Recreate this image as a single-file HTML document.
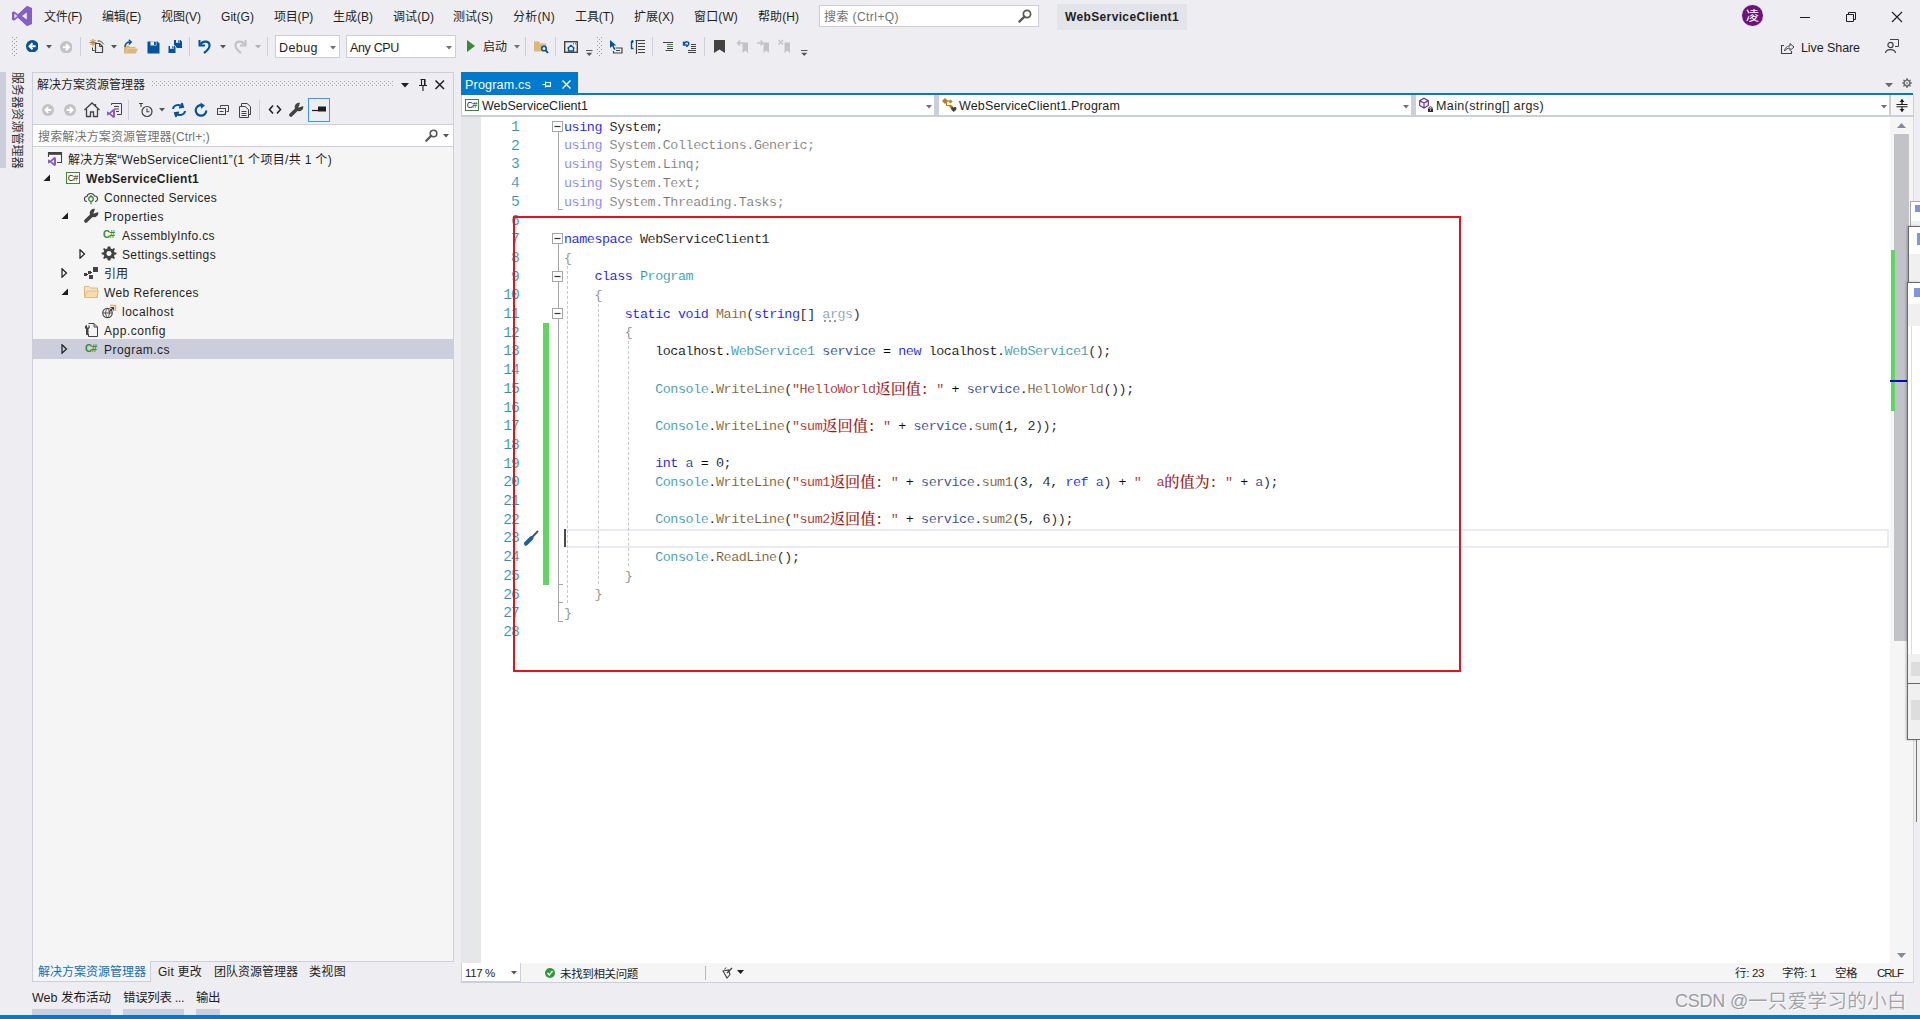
<!DOCTYPE html>
<html lang="zh-CN"><head><meta charset="utf-8"><title>WebServiceClient1 - Microsoft Visual Studio</title>
<style>
html,body{margin:0;padding:0}
body{width:1920px;height:1019px;overflow:hidden;background:#eeeef2;position:relative;font-family:"Liberation Sans","Noto Sans CJK SC",sans-serif;font-size:12px;color:#1e1e1e}
.a{position:absolute;display:block;box-sizing:border-box}
.t{position:absolute;white-space:pre;display:block}
.b{font-weight:bold}
.g{color:#717171}
.code{font-family:"Liberation Mono","Noto Serif CJK SC",monospace;font-size:13.4px;letter-spacing:-0.44px;color:#000;-webkit-text-stroke:0.14px #fff}
.code i{font-style:normal;font-weight:500;-webkit-text-stroke:0;line-height:0;position:relative;top:1px;font-family:"Noto Serif CJK SC",serif;font-size:15.2px;letter-spacing:0}
.ln{font-family:"Liberation Mono",monospace;font-size:14.6px;letter-spacing:-1.16px;color:#2b91af;text-align:right;width:40px;-webkit-text-stroke:0.14px #fff}
.k{color:#0000ff}.ty{color:#2b91af}.s{color:#a31515}.m{color:#74531f}.d{opacity:.55}.p{color:#808080}.v{color:#1f377f}

</style></head>
<body>
<svg class="a" style="left:11px;top:5px;" width="22" height="22" viewBox="0 0 22 22"><path d="M16 0.800 L6.900 9.300 L3 6.200 L1 7.200 L1 14.800 L3 15.800 L6.900 12.700 L16 21.200 L21 19 L21 3 Z M15.800 7.400 L15.800 14.600 L11 11 Z M3.400 8.800 L6.300 11 L3.400 13.200 Z" fill="#865fc5" fill-rule="evenodd"/></svg>
<span class="t" style="letter-spacing:-0.266px;left:44px;top:9px;line-height:16px;">文件(F)</span>
<span class="t" style="letter-spacing:-0.200px;left:102px;top:9px;line-height:16px;">编辑(E)</span>
<span class="t" style="letter-spacing:0.000px;left:161px;top:9px;line-height:16px;">视图(V)</span>
<span class="t" style="letter-spacing:0.055px;left:221px;top:9px;line-height:16px;">Git(G)</span>
<span class="t" style="letter-spacing:-0.200px;left:274px;top:9px;line-height:16px;">项目(P)</span>
<span class="t" style="letter-spacing:0.000px;left:333px;top:9px;line-height:16px;">生成(B)</span>
<span class="t" style="letter-spacing:0.066px;left:393px;top:9px;line-height:16px;">调试(D)</span>
<span class="t" style="letter-spacing:0.000px;left:453px;top:9px;line-height:16px;">测试(S)</span>
<span class="t" style="letter-spacing:0.266px;left:513px;top:9px;line-height:16px;">分析(N)</span>
<span class="t" style="letter-spacing:-0.066px;left:575px;top:9px;line-height:16px;">工具(T)</span>
<span class="t" style="letter-spacing:0.000px;left:634px;top:9px;line-height:16px;">扩展(X)</span>
<span class="t" style="letter-spacing:0.134px;left:694px;top:9px;line-height:16px;">窗口(W)</span>
<span class="t" style="letter-spacing:0.066px;left:758px;top:9px;line-height:16px;">帮助(H)</span>
<div class="a" style="left:819px;top:5px;width:220px;height:22px;background:#fff;border:1px solid #cccedb;"></div>
<span class="t g" style="letter-spacing:0.423px;left:824px;top:9px;line-height:16px;">搜索 (Ctrl+Q)</span>
<svg class="a" style="left:1017px;top:8px;" width="16" height="16" viewBox="0 0 16 16"><circle cx="10" cy="6" r="3.6" fill="none" stroke="#555" stroke-width="1.7"/><path d="M7.5 8.6 L2.3 13.6" stroke="#555" stroke-width="2.2" stroke-linecap="round"/></svg>
<div class="a" style="left:1057px;top:4px;width:130px;height:26px;background:#e3e4ea;"></div>
<span class="t b" style="letter-spacing:0.363px;left:1065px;top:9px;line-height:16px;">WebServiceClient1</span>
<div class="a" style="left:1742px;top:5px;width:21px;height:21px;background:#6a1577;border-radius:50%;box-shadow:0 0 0 1px #e4dcea"></div>
<span class="t" style="left:1746px;top:7px;line-height:18px;color:#fff;font-size:13px;">凌</span>
<svg class="a" style="left:1797px;top:9px;" width="16" height="16" viewBox="0 0 16 16"><path d="M3 8.5 H13" stroke="#1e1e1e" stroke-width="1"/></svg>
<svg class="a" style="left:1843px;top:9px;" width="16" height="16" viewBox="0 0 16 16"><path d="M3.5 5.5 H10.5 V12.5 H3.5 Z M5.5 5.5 V3.5 H12.5 V10.5 H10.5" fill="none" stroke="#1e1e1e" stroke-width="1"/></svg>
<svg class="a" style="left:1889px;top:9px;" width="16" height="16" viewBox="0 0 16 16"><path d="M3 3 L13 13 M13 3 L3 13" stroke="#1e1e1e" stroke-width="1.1"/></svg>
<svg class="a" style="left:12px;top:37px;" width="5" height="20" viewBox="0 0 5 20"><defs><pattern id="g12" width="4" height="4" patternUnits="userSpaceOnUse"><rect x="0" y="0" width="1" height="1" fill="#999"/><rect x="2" y="2" width="1" height="1" fill="#999"/></pattern></defs><rect width="5" height="20" fill="url(#g12)"/></svg>
<svg class="a" style="left:25.7px;top:39.8px" width="12.5" height="12.5" viewBox="0 0 13 13"><circle cx="6.5" cy="6.5" r="6.5" fill="#00539c"/><path d="M10 6.5 H4 M6.8 3.4 L3.6 6.5 L6.8 9.600" fill="none" stroke="#fff" stroke-width="2"/></svg>
<svg class="a" style="left:46px;top:45px;" width="7" height="4" viewBox="0 0 7 4"><path d="M0 0 H6 L3 3.5 Z" fill="#555"/></svg>
<svg class="a" style="left:59.8px;top:40.8px" width="12.5" height="12.5" viewBox="0 0 13 13"><circle cx="6.5" cy="6.5" r="6.5" fill="#c3c3c6"/><path d="M3 6.5 H9 M6.2 3.4 L9.400 6.5 L6.2 9.600" fill="none" stroke="#fff" stroke-width="2"/></svg>
<div class="a" style="left:80px;top:37px;width:1px;height:19px;background:#cccedb;"></div>
<svg class="a" style="left:89px;top:38px;" width="16" height="16" viewBox="0 0 16 16"><path d="M6.500 5.500 H10.500 L13.500 8.500 V14.500 H6.500 Z" fill="#eeeef2" stroke="#424242" stroke-width="1.200"/><path d="M10.500 5.500 V8.500 H13.500" fill="none" stroke="#424242"/><path d="M8.500 3 H11.500 L14.800 6.300 M3.500 9.500 V12.500 H5.500" fill="none" stroke="#424242" stroke-width="1"/><path d="M4 1 V8 M0.500 4.500 H7.500 M1.500 2 L6.500 7 M6.500 2 L1.500 7" stroke="#c27d1a" stroke-width="1"/></svg>
<svg class="a" style="left:111px;top:45px;" width="7" height="4" viewBox="0 0 7 4"><path d="M0 0 H6 L3 3.5 Z" fill="#555"/></svg>
<svg class="a" style="left:123px;top:38px;" width="16" height="17" viewBox="0 0 16 17"><path d="M1 7.500 H6 L7 9 H12.500 V10.500 H4.500 L2.500 15.500 H1 Z" fill="#dcb67a"/><path d="M4.800 10.800 H15 L12.800 15.500 H2.600 Z" fill="#dcb67a"/><path d="M2 9 C2 5 4 4 7.500 4 M5.800 1.800 L8.200 4 L5.800 6.400" fill="none" stroke="#00539c" stroke-width="1.400"/></svg>
<svg class="a" style="left:146.5px;top:40.5px;" width="13" height="13" viewBox="0 0 13 13"><path d="M0.500 0.500 H10.500 L12.500 2.500 V12.500 H0.500 Z" fill="#00539c"/><rect x="3.500" y="0.500" width="6" height="4" fill="#eeeef2"/><rect x="7" y="1" width="1.800" height="3" fill="#00539c"/></svg>
<svg class="a" style="left:167px;top:39px;" width="16" height="16" viewBox="0 0 16 16"><path d="M7 1 H13.500 L15 2.500 V9 H7 Z" fill="#00539c"/><rect x="9" y="1" width="4" height="2.800" fill="#eeeef2"/><rect x="11.200" y="1.300" width="1.300" height="2.200" fill="#00539c"/><path d="M1 6.500 H7.500 L9 8 V14.500 H1 Z" fill="#00539c" stroke="#eeeef2" stroke-width="1"/><rect x="3" y="7" width="4" height="2.800" fill="#eeeef2"/><rect x="5.200" y="7.300" width="1.300" height="2.200" fill="#00539c"/></svg>
<div class="a" style="left:189px;top:37px;width:1px;height:19px;background:#cccedb;"></div>
<svg class="a" style="left:197px;top:38px;" width="16" height="16" viewBox="0 0 16 16"><path d="M2.500 2 V7.500 H8" fill="none" stroke="#00539c" stroke-width="2"/><path d="M3.500 6.500 C6 2 13 3 12.500 8 C12.200 11 9 13.500 7 15" fill="none" stroke="#00539c" stroke-width="2.200"/></svg>
<svg class="a" style="left:220px;top:45px;" width="7" height="4" viewBox="0 0 7 4"><path d="M0 0 H6 L3 3.5 Z" fill="#555"/></svg>
<svg class="a" style="left:231.5px;top:38px;" width="16" height="16" viewBox="0 0 16 16"><path d="M13.500 2 V7.500 H8" fill="none" stroke="#c3c3c6" stroke-width="2"/><path d="M12.500 6.500 C10 2 3 3 3.500 8 C3.800 11 7 13.500 9 15" fill="none" stroke="#c3c3c6" stroke-width="2.200"/></svg>
<svg class="a" style="left:255px;top:45px;" width="7" height="4" viewBox="0 0 7 4"><path d="M0 0 H6 L3 3.5 Z" fill="#b0b0b4"/></svg>
<div class="a" style="left:267px;top:37px;width:1px;height:19px;background:#cccedb;"></div>
<div class="a" style="left:275px;top:35px;width:65px;height:23px;background:#fff;border:1px solid #cccedb;"></div>
<span class="t" style="letter-spacing:0.431px;left:279px;top:40px;line-height:16px;font-size:12.5px">Debug</span>
<svg class="a" style="left:330px;top:46px;" width="7" height="4" viewBox="0 0 7 4"><path d="M0 0 H6 L3 3.5 Z" fill="#717171"/></svg>
<div class="a" style="left:346px;top:35px;width:110px;height:23px;background:#fff;border:1px solid #cccedb;"></div>
<span class="t" style="letter-spacing:-0.344px;left:350px;top:40px;line-height:16px;font-size:12.5px">Any CPU</span>
<svg class="a" style="left:446px;top:46px;" width="7" height="4" viewBox="0 0 7 4"><path d="M0 0 H6 L3 3.5 Z" fill="#717171"/></svg>
<svg class="a" style="left:466px;top:39px;" width="10" height="14" viewBox="0 0 10 14"><path d="M1 1 L9 7 L1 13 Z" fill="#388a34"/></svg>
<span class="t" style="letter-spacing:-0.008px;left:483px;top:39px;line-height:16px;">启动</span>
<svg class="a" style="left:513.5px;top:45px;" width="7" height="4" viewBox="0 0 7 4"><path d="M0 0 H6 L3 3.5 Z" fill="#717171"/></svg>
<div class="a" style="left:525px;top:37px;width:1px;height:19px;background:#cccedb;"></div>
<svg class="a" style="left:533px;top:39px;" width="16" height="16" viewBox="0 0 16 16"><path d="M1 2.500 H6 L7 4.500 H13 V12.500 H1 Z" fill="#dcb67a"/><circle cx="11" cy="9.500" r="2.300" fill="#eeeef2" stroke="#00539c" stroke-width="1.500"/><path d="M12.800 11.300 L15 14" stroke="#00539c" stroke-width="1.900"/></svg>
<div class="a" style="left:555px;top:37px;width:1px;height:19px;background:#cccedb;"></div>
<svg class="a" style="left:563px;top:39px;" width="16" height="16" viewBox="0 0 16 16"><rect x="1.700" y="2.700" width="12.600" height="10.600" fill="none" stroke="#424242" stroke-width="1.400"/><path d="M10 4.800 H11 M12 4.800 H13" stroke="#424242"/><path d="M4.500 9.500 L8 6.300 L11.500 9.500 M5.500 9 V12 H10.500 V9" fill="none" stroke="#00539c" stroke-width="1.300"/></svg>
<svg class="a" style="left:586px;top:50px;" width="7" height="6" viewBox="0 0 7 6"><path d="M0 0.500 H6.500" stroke="#555"/><path d="M0.200 2.800 H6.300 L3.250 6 Z" fill="#555"/></svg>
<svg class="a" style="left:597px;top:37px;" width="5" height="19" viewBox="0 0 5 19"><defs><pattern id="g597" width="4" height="4" patternUnits="userSpaceOnUse"><rect x="0" y="0" width="1" height="1" fill="#999"/><rect x="2" y="2" width="1" height="1" fill="#999"/></pattern></defs><rect width="5" height="19" fill="url(#g597)"/></svg>
<svg class="a" style="left:608px;top:39px;" width="16" height="16" viewBox="0 0 16 16"><path d="M2 1 L2 9 L4.200 7 L6 11 L7.400 10.400 L5.600 6.600 L8.300 6.400 Z" fill="#00539c"/><path d="M7.500 9 H14 V14 H5.500 V12" fill="none" stroke="#424242" stroke-width="1.200"/><path d="M8 11.500 H12" stroke="#424242"/></svg>
<svg class="a" style="left:630px;top:39px;" width="16" height="16" viewBox="0 0 16 16"><path d="M3.500 2.500 H1.500 V9.500 H3.500" fill="none" stroke="#00539c" stroke-width="1.400"/><path d="M5.500 1.500 H15 M8 4.500 H15 M8 7.500 H15 M8 10.500 H15 M8 13.500 H15 M6.500 1 V15" stroke="#424242" stroke-width="1.200"/><path d="M2.500 1 V4" stroke="#00539c" stroke-width="1.200"/></svg>
<div class="a" style="left:652px;top:37px;width:1px;height:19px;background:#cccedb;"></div>
<svg class="a" style="left:661px;top:39px;" width="16" height="16" viewBox="0 0 16 16"><path d="M2 3.500 H12 M4.500 11.500 H12 M6 9.500 H12" stroke="#424242" stroke-width="1.100"/><path d="M6 5.500 H12 M6 7.500 H12" stroke="#388a34" stroke-width="1.100"/></svg>
<svg class="a" style="left:682px;top:39px;" width="16" height="16" viewBox="0 0 16 16"><path d="M1.500 2.500 V6 H5" fill="none" stroke="#00539c" stroke-width="1.300"/><path d="M2 5.500 C3 1.500 8 2.500 6.500 5.500 C6 6.500 5 7 4.500 8" fill="none" stroke="#00539c" stroke-width="1.500"/><path d="M9 5.500 H14 M9 7.500 H14 M9 9.500 H14 M6 11.500 H14 M6 13.500 H14" stroke="#424242" stroke-width="1.100"/></svg>
<div class="a" style="left:704px;top:37px;width:1px;height:19px;background:#cccedb;"></div>
<svg class="a" style="left:714px;top:40px;" width="11" height="13" viewBox="0 0 11 13"><path d="M0 0 H11 V13 L5.5 9.500 L0 13 Z" fill="#424242"/></svg>
<svg class="a" style="left:736px;top:39px;" width="14" height="15" viewBox="0 0 14 15"><path d="M6.500 3.500 H12 V14 L9.250 11.500 L6.500 14 Z" fill="#c3c3c6"/><path d="M7 4 H2 M4 1.500 L1.500 4 L4 6.500" stroke="#c3c3c6" stroke-width="1.500" fill="none"/></svg>
<svg class="a" style="left:757px;top:39px;" width="14" height="15" viewBox="0 0 14 15"><path d="M6.500 3.500 H12 V14 L9.250 11.500 L6.500 14 Z" fill="#c3c3c6"/><path d="M0 4 H6 M3.500 1.500 L6 4 L3.500 6.500" stroke="#c3c3c6" stroke-width="1.500" fill="none"/></svg>
<svg class="a" style="left:778px;top:39px;" width="14" height="15" viewBox="0 0 14 15"><path d="M6.500 3.500 H12 V14 L9.250 11.500 L6.500 14 Z" fill="#c3c3c6"/><path d="M0.500 1 L5 5.500 M5 1 L0.500 5.500" stroke="#c3c3c6" stroke-width="1.500" fill="none"/></svg>
<svg class="a" style="left:801px;top:50px;" width="7" height="6" viewBox="0 0 7 6"><path d="M0 0.500 H6.500" stroke="#555"/><path d="M0.200 2.800 H6.300 L3.250 6 Z" fill="#555"/></svg>
<svg class="a" style="left:1780px;top:41px;" width="15" height="14" viewBox="0 0 15 14"><path d="M4 4.500 H1.5 V12.5 H11.5 V10" fill="none" stroke="#424242" stroke-width="1.1"/><path d="M4.500 10 C5 6 8 5 10 5 V2.500 L14 6 L10 9.500 V7.200 C8 7 6 8 4.500 10 Z" fill="none" stroke="#424242" stroke-width="1"/></svg>
<span class="t" style="letter-spacing:-0.077px;left:1801px;top:40px;line-height:16px;font-size:12.5px">Live Share</span>
<svg class="a" style="left:1884px;top:38px;" width="16" height="16" viewBox="0 0 16 16"><path d="M6 1.5 H14.5 V8.5 H11" fill="none" stroke="#424242"/><circle cx="6.500" cy="7" r="2.600" fill="none" stroke="#424242" stroke-width="1.2"/><path d="M1.500 15 C2 10.500 11 10.500 11.500 15" fill="none" stroke="#424242" stroke-width="1.2"/></svg>
<div class="a" style="left:0px;top:72px;width:6px;height:96px;background:#cccedb;"></div>
<div class="t" style="left:24px;top:72px;width:97px;height:14px;line-height:14px;font-size:12px;letter-spacing:0.1px;color:#333;transform-origin:0 0;transform:rotate(90deg)">服务器资源管理器</div>
<div class="a" style="left:32px;top:72px;width:422px;height:890px;border:1px solid #cccedb;"></div>
<span class="t" style="letter-spacing:-0.002px;left:37px;top:77px;line-height:16px;">解决方案资源管理器</span>
<svg class="a" style="left:152px;top:81px;" width="241" height="5" viewBox="0 0 241 5"><defs><pattern id="gt" width="4" height="4" patternUnits="userSpaceOnUse"><rect x="0" y="0" width="1" height="1" fill="#aaa"/><rect x="2" y="2" width="1" height="1" fill="#aaa"/></pattern></defs><rect width="241" height="5" fill="url(#gt)"/></svg>
<svg class="a" style="left:401px;top:83px;" width="9" height="5" viewBox="0 0 9 5"><path d="M0 0 H8 L4 4.500 Z" fill="#1e1e1e"/></svg>
<svg class="a" style="left:417.7px;top:77.5px;" width="10" height="14" viewBox="0 0 10 14"><path d="M2.5 1.5 H7.500 M3.500 1.5 V7.500 M6.500 1.5 V7.500 M7 1.5 V7.500 M1 7.500 H9 M5 7.500 V13" stroke="#1e1e1e" stroke-width="1.1" fill="none"/></svg>
<svg class="a" style="left:434px;top:79px;" width="12" height="12" viewBox="0 0 12 12"><path d="M1.5 1.5 L10 10 M10 1.5 L1.5 10" stroke="#1e1e1e" stroke-width="1.5"/></svg>
<svg class="a" style="left:42px;top:104px" width="12" height="12" viewBox="0 0 13 13"><circle cx="6.5" cy="6.5" r="6.5" fill="#c3c3c6"/><path d="M10 6.5 H4 M6.8 3.4 L3.6 6.5 L6.8 9.600" fill="none" stroke="#fff" stroke-width="2"/></svg>
<svg class="a" style="left:64px;top:104px" width="12" height="12" viewBox="0 0 13 13"><circle cx="6.5" cy="6.5" r="6.5" fill="#c3c3c6"/><path d="M3 6.5 H9 M6.2 3.4 L9.400 6.5 L6.2 9.600" fill="none" stroke="#fff" stroke-width="2"/></svg>
<svg class="a" style="left:83px;top:101px;" width="18" height="17" viewBox="0 0 18 17"><path d="M1.5 9 L9 2 L16.5 9 M12.500 3 V5.500 M3.500 8 V15.500 H7.500 V11 H10.500 V15.500 H14.500 V8" fill="none" stroke="#424242" stroke-width="1.3"/></svg>
<svg class="a" style="left:106px;top:102px;" width="17" height="16" viewBox="0 0 17 16"><path d="M5.5 3 V1.5 H15.500 V12.500 H11" fill="none" stroke="#424242"/><path d="M8 4.500 H13 M8 7 H13 M10 9.500 H13" stroke="#424242"/><path d="M7.200 7 L3.300 10.600 L1.700 9.400 L1 9.800 V13.200 L1.700 13.600 L3.300 12.400 L7.200 16 L9 15.200 V7.800 Z M7 9.700 V13.300 L4.600 11.500 Z" fill="#865fc5" fill-rule="evenodd"/></svg>
<div class="a" style="left:128px;top:100px;width:1px;height:20px;background:#cccedb;"></div>
<svg class="a" style="left:138px;top:102px;" width="16" height="16" viewBox="0 0 16 16"><circle cx="9" cy="9.500" r="5" fill="none" stroke="#424242" stroke-width="1.2"/><path d="M9 6.500 V9.800 H11.500" fill="none" stroke="#424242" stroke-width="1.1"/><path d="M1 1.500 H5 M3 1.500 V5" stroke="#424242" stroke-width="1.1"/></svg>
<svg class="a" style="left:159px;top:108px;" width="7" height="4" viewBox="0 0 7 4"><path d="M0 0 H6 L3 3.5 Z" fill="#555"/></svg>
<svg class="a" style="left:171px;top:102px;" width="16" height="16" viewBox="0 0 16 16"><path d="M2 7 C2.500 3 8 1.500 11.500 4.500 M10.800 1 L12 5 L8 5.500" fill="none" stroke="#00539c" stroke-width="2"/><path d="M14 9 C13.500 13 8 14.500 4.500 11.500 M5.200 15 L4 11 L8 10.500" fill="none" stroke="#00539c" stroke-width="2"/></svg>
<svg class="a" style="left:193px;top:102px;" width="16" height="16" viewBox="0 0 16 16"><path d="M9 3.200 A5.300 5.300 0 1 0 13.300 8.500" fill="none" stroke="#00539c" stroke-width="2.200"/><path d="M7.500 0.500 L12 3.500 L8 6.800 Z" fill="#00539c"/></svg>
<svg class="a" style="left:216px;top:103px;" width="14" height="14" viewBox="0 0 14 14"><path d="M4.500 4.500 V2.500 H12.500 V8.500 H10.500" fill="none" stroke="#424242"/><rect x="1.500" y="5.500" width="8" height="6" fill="none" stroke="#424242"/><path d="M3.500 8.500 H7.500" stroke="#424242"/></svg>
<svg class="a" style="left:237px;top:102px;" width="16" height="16" viewBox="0 0 16 16"><path d="M4.500 4 V1.500 H10 L13.500 4.500 V12.500 H11.500" fill="none" stroke="#424242"/><path d="M2.500 4.500 H8 L11.500 7.500 V15.500 H2.500 Z" fill="none" stroke="#424242"/><path d="M4.500 9.500 H9.500 M4.500 11.500 H9.500 M4.500 13.500 H9.500" stroke="#424242"/></svg>
<div class="a" style="left:259px;top:100px;width:1px;height:20px;background:#cccedb;"></div>
<svg class="a" style="left:268px;top:104px;" width="14" height="11" viewBox="0 0 14 11"><path d="M5 1.500 L1.500 5.500 L5 9.500 M9 1.500 L12.500 5.500 L9 9.500" fill="none" stroke="#1e1e1e" stroke-width="1.500"/></svg>
<svg class="a" style="left:288px;top:102px;" width="16" height="16" viewBox="0 0 16 16"><path d="M9.300 6.700 L2.900 13.100" stroke="#424242" stroke-width="3.600" stroke-linecap="round"/><circle cx="11" cy="5" r="4.300" fill="#424242"/><path d="M10.300 5.700 L12.300 0 L16 0 L16 3.700 Z" fill="#eeeef2"/></svg>
<div class="a" style="left:308px;top:98px;width:22px;height:24px;border:1px solid #3399ff;"></div>
<svg class="a" style="left:312px;top:105px;" width="15" height="9" viewBox="0 0 15 9"><path d="M0 5.500 H7" stroke="#1e1e1e" stroke-width="1.2"/><rect x="6" y="1.500" width="8" height="5" fill="#1e1e1e"/></svg>
<div class="a" style="left:33px;top:124px;width:420px;height:23px;background:#fff;border:1px solid #cccedb;border-left:none;border-right:none"></div>
<span class="t g" style="letter-spacing:0.158px;left:38px;top:129px;line-height:16px;">搜索解决方案资源管理器(Ctrl+;)</span>
<svg class="a" style="left:424px;top:128px;" width="16" height="16" viewBox="0 0 16 16"><circle cx="9.500" cy="5.500" r="3.300" fill="none" stroke="#555" stroke-width="1.600"/><path d="M7.200 7.800 L2.300 12.800" stroke="#555" stroke-width="2.200" stroke-linecap="round"/></svg>
<svg class="a" style="left:443px;top:134px;" width="7" height="4" viewBox="0 0 7 4"><path d="M0 0 H6 L3 3.5 Z" fill="#555"/></svg>
<div class="a" style="left:33px;top:147px;width:420px;height:814px;background:#f5f5f5;"></div>
<div class="a" style="left:33px;top:339px;width:420px;height:20px;background:#cccedb;"></div>
<svg class="a" style="left:47px;top:151px;" width="16" height="15" viewBox="0 0 16 15"><path d="M1.500 6 V1.500 H14.500 V11.500 H10" fill="none" stroke="#424242" stroke-width="1.100"/><rect x="1" y="1" width="14" height="2.800" fill="#424242"/><path d="M7.200 6 L3.300 9.600 L1.700 8.400 L1 8.800 V12.200 L1.700 12.600 L3.300 11.400 L7.200 15 L9 14.200 V6.800 Z M7 8.700 V12.300 L4.600 10.500 Z" fill="#865fc5" fill-rule="evenodd"/></svg>
<span class="t" style="letter-spacing:0.319px;left:68px;top:152px;line-height:16px;">解决方案“WebServiceClient1”(1 个项目/共 1 个)</span>
<svg class="a" style="left:43px;top:174px;" width="8" height="8" viewBox="0 0 8 8"><path d="M7 0.500 V7 H0.500 Z" fill="#1e1e1e"/></svg>
<div class="a" style="left:66px;top:172px;width:14px;height:12px;background:#fff;border:1px solid #388a34;"></div>
<span class="t" style="left:67.8px;top:172.5px;line-height:11px;font-size:8.800px;color:#222;letter-spacing:-0.700px">C#</span>
<span class="t b" style="letter-spacing:0.304px;left:86px;top:171px;line-height:16px;">WebServiceClient1</span>
<svg class="a" style="left:83px;top:190px;" width="16" height="15" viewBox="0 0 16 15"><path d="M4 11.500 C0.500 11.500 0.500 6.500 4 6.500 C4.500 2.500 10.500 2.500 11.500 6 C15.500 6 15.500 11.500 12 11.500" fill="none" stroke="#424242" stroke-width="1.100"/><circle cx="8" cy="9" r="2.300" fill="none" stroke="#388a34" stroke-width="1.300"/><path d="M8 5 V7 M8 11.500 V14" stroke="#388a34" stroke-width="1.300"/></svg>
<span class="t" style="letter-spacing:0.312px;left:104px;top:190px;line-height:16px;">Connected Services</span>
<svg class="a" style="left:61px;top:212px;" width="8" height="8" viewBox="0 0 8 8"><path d="M7 0.500 V7 H0.500 Z" fill="#1e1e1e"/></svg>
<svg class="a" style="left:83px;top:208px;" width="16" height="16" viewBox="0 0 16 16"><path d="M9.300 6.700 L2.900 13.100" stroke="#424242" stroke-width="3.600" stroke-linecap="round"/><circle cx="11" cy="5" r="4.300" fill="#424242"/><path d="M10.300 5.700 L12.300 0 L16 0 L16 3.700 Z" fill="#f5f5f5"/></svg>
<span class="t" style="letter-spacing:0.530px;left:104px;top:209px;line-height:16px;">Properties</span>
<span class="t" style="left:103px;top:228.5px;line-height:12px;font-size:10px;font-weight:bold;color:#388a34;letter-spacing:-0.600px">C#</span>
<span class="t" style="letter-spacing:0.375px;left:122px;top:228px;line-height:16px;">AssemblyInfo.cs</span>
<svg class="a" style="left:79px;top:249px;" width="7" height="10" viewBox="0 0 7 10"><path d="M1 0.800 L5.500 5 L1 9.200 Z" fill="none" stroke="#1e1e1e" stroke-width="1.200"/></svg>
<svg class="a" style="left:101px;top:246px;" width="16" height="16" viewBox="0 0 16 16"><path d="M8 0.500 L9.300 0.600 L9.800 2.600 L11.200 3.200 L13 2.100 L14 3.100 L12.900 4.900 L13.500 6.300 L15.500 6.800 V8.300 L13.500 8.800 L12.900 10.200 L14 12 L13 13 L11.200 11.900 L9.800 12.500 L9.300 14.500 H6.800 L6.300 12.500 L4.900 11.900 L3.100 13 L2.100 12 L3.200 10.200 L2.600 8.800 L0.600 8.300 V6.800 L2.600 6.300 L3.200 4.900 L2.100 3.100 L3.100 2.100 L4.900 3.200 L6.300 2.600 L6.800 0.600 Z M8 5 A2.500 2.500 0 1 0 8.010 5 Z" fill="#424242" fill-rule="evenodd"/></svg>
<span class="t" style="letter-spacing:0.349px;left:122px;top:247px;line-height:16px;">Settings.settings</span>
<svg class="a" style="left:61px;top:268px;" width="7" height="10" viewBox="0 0 7 10"><path d="M1 0.800 L5.500 5 L1 9.200 Z" fill="none" stroke="#1e1e1e" stroke-width="1.200"/></svg>
<svg class="a" style="left:83px;top:266px;" width="16" height="14" viewBox="0 0 16 14"><rect x="10" y="1" width="5" height="5" fill="#424242"/><rect x="5" y="5" width="3" height="3" fill="#424242"/><rect x="1" y="7" width="3" height="3" fill="#424242"/><rect x="6" y="9" width="4" height="4" fill="#424242"/><path d="M4 8.500 H6 M8 6.500 H10" stroke="#424242" stroke-dasharray="1 1"/></svg>
<span class="t" style="letter-spacing:-0.008px;left:104px;top:266px;line-height:16px;">引用</span>
<svg class="a" style="left:61px;top:288px;" width="8" height="8" viewBox="0 0 8 8"><path d="M7 0.500 V7 H0.500 Z" fill="#1e1e1e"/></svg>
<svg class="a" style="left:83px;top:285px;" width="16" height="14" viewBox="0 0 16 14"><path d="M1.500 1.500 H6 L7.500 3 H14.500 V12.500 H1.500 Z" fill="#f5e4c3" stroke="#dcb67a"/><path d="M1.500 12.500 L4 6 H15.500 L13.800 12.500 Z" fill="#f3dcae" stroke="#dcb67a" stroke-width="0.800"/></svg>
<span class="t" style="letter-spacing:0.417px;left:104px;top:285px;line-height:16px;">Web References</span>
<svg class="a" style="left:101px;top:303px;" width="16" height="16" viewBox="0 0 16 16"><circle cx="6.500" cy="10" r="4.800" fill="none" stroke="#424242" stroke-width="1.100"/><path d="M2 10 H11 M6.500 5.500 C4 8 4 12 6.500 14.500 M6.500 5.500 C9 8 9 12 6.500 14.500" fill="none" stroke="#424242" stroke-width="0.900"/><path d="M9 2.500 H14.500 V8" fill="none" stroke="#dcb67a" stroke-width="1.600"/><path d="M8 9 L12.500 4.500 M9.500 4.500 H12.500 V7.500" fill="none" stroke="#424242" stroke-width="1.200"/></svg>
<span class="t" style="letter-spacing:0.514px;left:122px;top:304px;line-height:16px;">localhost</span>
<svg class="a" style="left:83px;top:322px;" width="16" height="16" viewBox="0 0 16 16"><path d="M5.500 1.500 H11 L14.500 5 V14.500 H5.500 V12" fill="none" stroke="#424242"/><path d="M11 1.500 V5 H14.500" fill="none" stroke="#424242"/><path d="M4.500 3 C2 3 1 5.500 3 7 V12 C3 13.500 5.500 13.500 5.500 12 V7 C7.500 5.500 7 3.500 5.500 3 V5.500 H4 V3 Z" fill="#424242"/></svg>
<span class="t" style="letter-spacing:0.528px;left:104px;top:323px;line-height:16px;">App.config</span>
<svg class="a" style="left:61px;top:344px;" width="7" height="10" viewBox="0 0 7 10"><path d="M1 0.800 L5.500 5 L1 9.200 Z" fill="none" stroke="#1e1e1e" stroke-width="1.200"/></svg>
<span class="t" style="left:85px;top:342.5px;line-height:12px;font-size:10px;font-weight:bold;color:#388a34;letter-spacing:-0.600px">C#</span>
<span class="t" style="letter-spacing:0.464px;left:104px;top:342px;line-height:16px;">Program.cs</span>
<div class="a" style="left:32px;top:961px;width:119px;height:21px;background:#f5f5f5;border:1px solid #cccedb;border-top:none"></div>
<span class="t" style="letter-spacing:-0.002px;left:38px;top:964px;line-height:16px;color:#0e70c0">解决方案资源管理器</span>
<span class="t" style="letter-spacing:0.221px;left:158px;top:964px;line-height:16px;">Git 更改</span>
<span class="t" style="letter-spacing:-0.002px;left:214px;top:964px;line-height:16px;">团队资源管理器</span>
<span class="t" style="letter-spacing:0.328px;left:309px;top:964px;line-height:16px;">类视图</span>
<span class="t" style="letter-spacing:0.006px;left:32px;top:990px;line-height:16px;font-size:12.5px">Web 发布活动</span>
<span class="t" style="letter-spacing:-0.363px;left:123px;top:990px;line-height:16px;font-size:12.5px">错误列表 ...</span>
<span class="t" style="letter-spacing:-0.508px;left:196px;top:990px;line-height:16px;font-size:12.5px">输出</span>
<div class="a" style="left:32px;top:1009px;width:79px;height:6px;background:#cccedb;"></div>
<div class="a" style="left:123px;top:1009px;width:61px;height:6px;background:#cccedb;"></div>
<div class="a" style="left:196px;top:1009px;width:24px;height:6px;background:#cccedb;"></div>
<div class="a" style="left:0px;top:1015px;width:1920px;height:4px;background:#007acc;"></div>
<div class="a" style="left:461px;top:72px;width:117px;height:22px;background:#007acc;"></div>
<span class="t" style="letter-spacing:0.209px;left:465px;top:77px;line-height:16px;color:#fff;font-size:12.5px">Program.cs</span>
<svg class="a" style="left:542px;top:80px;" width="10" height="9" viewBox="0 0 10 9"><path d="M0.500 4.500 H3.500 M3.500 1.500 V7.500 M3.500 2.500 H8.500 V6.500 H3.500 M3.500 6 H8.500" stroke="#fff" stroke-width="1.100" fill="none"/></svg>
<svg class="a" style="left:561px;top:79px;" width="11" height="11" viewBox="0 0 11 11"><path d="M1.500 1.500 L9.500 9.500 M9.500 1.500 L1.500 9.500" stroke="#fff" stroke-width="1.400"/></svg>
<div class="a" style="left:461px;top:92.8px;width:1452px;height:2.5px;background:#007acc;"></div>
<svg class="a" style="left:1885px;top:83px;" width="8" height="5" viewBox="0 0 8 5"><path d="M0 0 H8 L4 4.300 Z" fill="#6a6a6a"/></svg>
<svg class="a" style="left:1902px;top:78px;" width="10" height="10" viewBox="0.500 0.500 15 14"><path d="M8 0.500 L9.300 0.600 L9.800 2.600 L11.200 3.200 L13 2.100 L14 3.100 L12.900 4.900 L13.500 6.300 L15.500 6.800 V8.300 L13.500 8.800 L12.900 10.200 L14 12 L13 13 L11.200 11.900 L9.800 12.500 L9.300 14.500 H6.800 L6.300 12.500 L4.900 11.900 L3.100 13 L2.100 12 L3.200 10.200 L2.600 8.800 L0.600 8.300 V6.800 L2.600 6.300 L3.200 4.900 L2.100 3.100 L3.100 2.100 L4.900 3.200 L6.300 2.600 L6.800 0.600 Z M8 4.300 A3.200 3.200 0 1 0 8.010 4.300 Z M8 6.300 A1.200 1.200 0 1 1 7.990 6.300 Z" fill="#6a6a6a" fill-rule="evenodd"/></svg>
<div class="a" style="left:461px;top:95.2px;width:1453px;height:21.8px;background:#cccedb;"></div>
<div class="a" style="left:462px;top:95.2px;width:472px;height:19.9px;background:#fff;"></div>
<div class="a" style="left:939px;top:95.2px;width:472px;height:19.9px;background:#fff;"></div>
<div class="a" style="left:1416px;top:95.2px;width:473px;height:19.9px;background:#fff;"></div>
<div class="a" style="left:1891px;top:95.2px;width:22px;height:19.9px;background:#f5f5f5;"></div>
<div class="a" style="left:465px;top:99px;width:14px;height:12px;background:#fff;border:1px solid #388a34;"></div>
<span class="t" style="left:466.8px;top:99.5px;line-height:11px;font-size:8.800px;color:#222;letter-spacing:-0.700px">C#</span>
<span class="t" style="letter-spacing:-0.005px;left:482px;top:98px;line-height:16px;font-size:12.5px">WebServiceClient1</span>
<svg class="a" style="left:926px;top:105px;" width="7" height="4" viewBox="0 0 7 4"><path d="M0 0 H6 L3 3.5 Z" fill="#717171"/></svg>
<svg class="a" style="left:941px;top:97px;" width="16" height="16" viewBox="0 0 16 16"><path d="M1 4 L4 1 L7 4 L4 7 Z" fill="#c27d1a"/><path d="M7.500 4.500 L9.500 2.500 L11.500 4.500 L9.500 6.500 Z" fill="#c27d1a"/><path d="M8 9.500 L10 7.500 L12 9.500 L10 11.500 Z" fill="#c27d1a"/><path d="M4 4 H9.500 M5.500 4 V8.500 H10" fill="none" stroke="#c27d1a" stroke-width="1.100"/><path d="M10 11.500 C10 9.500 12.500 9.500 12.800 11 C13 9.500 15.500 9.500 15.500 11.500 C15.500 13 13.500 14 12.800 15 C12 14 10 13 10 11.500 Z" fill="#424242"/></svg>
<span class="t" style="letter-spacing:0.141px;left:959px;top:98px;line-height:16px;font-size:12.5px">WebServiceClient1.Program</span>
<svg class="a" style="left:1403px;top:105px;" width="7" height="4" viewBox="0 0 7 4"><path d="M0 0 H6 L3 3.5 Z" fill="#717171"/></svg>
<svg class="a" style="left:1418px;top:97px;" width="16" height="16" viewBox="0 0 16 16"><path d="M6 1.300 L10.300 3.700 V8.500 L6 11 L1.700 8.500 V3.700 Z M1.700 3.700 L6 6 L10.300 3.700 M6 6 V11" fill="none" stroke="#6b2f9e" stroke-width="1.200"/><rect x="10" y="11.500" width="5" height="3.500" fill="#2b2b2b"/><path d="M11 11.500 V10.800 C11 9.500 14 9.500 14 10.800 V11.500" fill="none" stroke="#2b2b2b" stroke-width="1"/><rect x="12" y="12.500" width="1" height="1.200" fill="#fff"/></svg>
<span class="t" style="letter-spacing:0.382px;left:1436px;top:98px;line-height:16px;font-size:12.5px">Main(string[] args)</span>
<svg class="a" style="left:1881px;top:105px;" width="7" height="4" viewBox="0 0 7 4"><path d="M0 0 H6 L3 3.5 Z" fill="#717171"/></svg>
<svg class="a" style="left:1895px;top:98px;" width="14" height="15" viewBox="0 0 14 15"><path d="M1.500 6.500 H12.500 M1.500 8.700 H12.500" stroke="#1e1e1e" stroke-width="1.100"/><path d="M7 1.500 V6 M7 9 V13.500" stroke="#1e1e1e" stroke-width="1.300"/><path d="M4.500 4 L7 1 L9.500 4 Z M4.500 11 L7 14 L9.500 11 Z" fill="#1e1e1e"/></svg>
<div class="a" style="left:462px;top:117px;width:1428px;height:846px;background:#fff;"></div>
<div class="a" style="left:461px;top:117px;width:20px;height:846px;background:#e6e7e8;"></div>
<div class="a" style="left:1890px;top:117px;width:24px;height:846px;background:#f5f5f5;border-right:1px solid #d8d9e3"></div>
<svg class="a" style="left:1897px;top:123px;" width="9" height="5" viewBox="0 0 9 5"><path d="M0 5 L4.500 0 L9 5 Z" fill="#868999"/></svg>
<svg class="a" style="left:1897px;top:953px;" width="9" height="5" viewBox="0 0 9 5"><path d="M0 0 L4.500 5 L9 0 Z" fill="#868999"/></svg>
<div class="a" style="left:1894px;top:134px;width:15px;height:507px;background:#c2c3c9;"></div>
<div class="a" style="left:1891px;top:250px;width:4px;height:161px;background:#5fd75f;"></div>
<div class="a" style="left:1890px;top:380px;width:18px;height:2px;background:#0000cd;"></div>
<div class="a" style="left:564px;top:529px;width:1325px;height:19px;border:2px solid #eaeaf2;"></div>
<div class="a" style="left:564px;top:529px;width:2px;height:18px;background:#4a4a4a;"></div>
<div class="a" style="left:543px;top:323px;width:6px;height:262px;background:#5fd75f;"></div>
<div class="a" style="left:558px;top:131px;width:1px;height:78px;background:#a5a5a5;"></div>
<div class="a" style="left:558px;top:209px;width:5px;height:1px;background:#a5a5a5;"></div>
<div class="a" style="left:558px;top:243px;width:1px;height:378px;background:#a5a5a5;"></div>
<div class="a" style="left:558px;top:584px;width:5px;height:1px;background:#a5a5a5;"></div>
<div class="a" style="left:558px;top:602px;width:5px;height:1px;background:#a5a5a5;"></div>
<div class="a" style="left:558px;top:621px;width:5px;height:1px;background:#a5a5a5;"></div>
<svg class="a" style="left:552px;top:121px;" width="11" height="11" viewBox="0 0 11 11"><rect x="0.500" y="0.500" width="10" height="10" fill="#fff" stroke="#a5a5a5"/><path d="M2.500 5.500 H8.500" stroke="#333" stroke-width="1.200"/></svg>
<svg class="a" style="left:552px;top:233px;" width="11" height="11" viewBox="0 0 11 11"><rect x="0.500" y="0.500" width="10" height="10" fill="#fff" stroke="#a5a5a5"/><path d="M2.500 5.500 H8.500" stroke="#333" stroke-width="1.200"/></svg>
<svg class="a" style="left:552px;top:271px;" width="11" height="11" viewBox="0 0 11 11"><rect x="0.500" y="0.500" width="10" height="10" fill="#fff" stroke="#a5a5a5"/><path d="M2.500 5.500 H8.500" stroke="#333" stroke-width="1.200"/></svg>
<svg class="a" style="left:552px;top:308px;" width="11" height="11" viewBox="0 0 11 11"><rect x="0.500" y="0.500" width="10" height="10" fill="#fff" stroke="#a5a5a5"/><path d="M2.500 5.500 H8.500" stroke="#333" stroke-width="1.200"/></svg>
<div class="a" style="left:567px;top:266px;width:1px;height:337px;border-left:1px dashed #c8c8c8;"></div>
<div class="a" style="left:598px;top:304px;width:1px;height:280px;border-left:1px dashed #c8c8c8;"></div>
<div class="a" style="left:628px;top:341px;width:1px;height:225px;border-left:1px dashed #c8c8c8;"></div>
<span class="t ln" style="left:478.5px;top:118.0px;line-height:18.7px">1</span>
<span class="t ln" style="left:478.5px;top:136.7px;line-height:18.7px">2</span>
<span class="t ln" style="left:478.5px;top:155.4px;line-height:18.7px">3</span>
<span class="t ln" style="left:478.5px;top:174.1px;line-height:18.7px">4</span>
<span class="t ln" style="left:478.5px;top:192.8px;line-height:18.7px">5</span>
<span class="t ln" style="left:478.5px;top:211.5px;line-height:18.7px">6</span>
<span class="t ln" style="left:478.5px;top:230.2px;line-height:18.7px">7</span>
<span class="t ln" style="left:478.5px;top:248.9px;line-height:18.7px">8</span>
<span class="t ln" style="left:478.5px;top:267.6px;line-height:18.7px">9</span>
<span class="t ln" style="left:478.5px;top:286.3px;line-height:18.7px">10</span>
<span class="t ln" style="left:478.5px;top:305.0px;line-height:18.7px">11</span>
<span class="t ln" style="left:478.5px;top:323.7px;line-height:18.7px">12</span>
<span class="t ln" style="left:478.5px;top:342.4px;line-height:18.7px">13</span>
<span class="t ln" style="left:478.5px;top:361.1px;line-height:18.7px">14</span>
<span class="t ln" style="left:478.5px;top:379.8px;line-height:18.7px">15</span>
<span class="t ln" style="left:478.5px;top:398.5px;line-height:18.7px">16</span>
<span class="t ln" style="left:478.5px;top:417.2px;line-height:18.7px">17</span>
<span class="t ln" style="left:478.5px;top:435.9px;line-height:18.7px">18</span>
<span class="t ln" style="left:478.5px;top:454.6px;line-height:18.7px">19</span>
<span class="t ln" style="left:478.5px;top:473.3px;line-height:18.7px">20</span>
<span class="t ln" style="left:478.5px;top:492.0px;line-height:18.7px">21</span>
<span class="t ln" style="left:478.5px;top:510.7px;line-height:18.7px">22</span>
<span class="t ln" style="left:478.5px;top:529.4px;line-height:18.7px">23</span>
<span class="t ln" style="left:478.5px;top:548.1px;line-height:18.7px">24</span>
<span class="t ln" style="left:478.5px;top:566.8px;line-height:18.7px">25</span>
<span class="t ln" style="left:478.5px;top:585.5px;line-height:18.7px">26</span>
<span class="t ln" style="left:478.5px;top:604.2px;line-height:18.7px">27</span>
<span class="t ln" style="left:478.5px;top:622.9px;line-height:18.7px">28</span>
<span class="t code" style="left:564px;top:118.7px;line-height:18.7px"><span class="k">using</span> System;</span>
<span class="t code" style="left:564px;top:137.4px;line-height:18.7px"><span class="d"><span class="k">using</span> System.Collections.Generic;</span></span>
<span class="t code" style="left:564px;top:156.1px;line-height:18.7px"><span class="d"><span class="k">using</span> System.Linq;</span></span>
<span class="t code" style="left:564px;top:174.8px;line-height:18.7px"><span class="d"><span class="k">using</span> System.Text;</span></span>
<span class="t code" style="left:564px;top:193.5px;line-height:18.7px"><span class="d"><span class="k">using</span> System.Threading.Tasks;</span></span>
<span class="t code" style="left:564px;top:230.9px;line-height:18.7px"><span class="k">namespace</span> WebServiceClient1</span>
<span class="t code" style="left:564px;top:249.6px;line-height:18.7px"><span class="p">{</span></span>
<span class="t code" style="left:564px;top:268.3px;line-height:18.7px">    <span class="k">class</span> <span class="ty">Program</span></span>
<span class="t code" style="left:564px;top:287.0px;line-height:18.7px">    <span class="p">{</span></span>
<span class="t code" style="left:564px;top:305.7px;line-height:18.7px">        <span class="k">static</span> <span class="k">void</span> <span class="m">Main</span>(<span class="k">string</span>[] <span class="v d">args</span>)</span>
<span class="t code" style="left:564px;top:324.4px;line-height:18.7px">        <span class="p">{</span></span>
<span class="t code" style="left:564px;top:343.1px;line-height:18.7px">            localhost.<span class="ty">WebService1</span> <span class="v">service</span> = <span class="k">new</span> localhost.<span class="ty">WebService1</span>();</span>
<span class="t code" style="left:564px;top:380.5px;line-height:18.7px">            <span class="ty">Console</span>.<span class="m">WriteLine</span>(<span class="s">"HelloWorld<i>返回值：</i>"</span> + <span class="v">service</span>.<span class="m">HelloWorld</span>());</span>
<span class="t code" style="left:564px;top:417.9px;line-height:18.7px">            <span class="ty">Console</span>.<span class="m">WriteLine</span>(<span class="s">"sum<i>返回值：</i>"</span> + <span class="v">service</span>.<span class="m">sum</span>(1, 2));</span>
<span class="t code" style="left:564px;top:455.3px;line-height:18.7px">            <span class="k">int</span> <span class="v">a</span> = 0;</span>
<span class="t code" style="left:564px;top:474.0px;line-height:18.7px">            <span class="ty">Console</span>.<span class="m">WriteLine</span>(<span class="s">"sum1<i>返回值：</i>"</span> + <span class="v">service</span>.<span class="m">sum1</span>(3, 4, <span class="k">ref</span> <span class="v">a</span>) + <span class="s">"  a<i>的值为：</i>"</span> + <span class="v">a</span>);</span>
<span class="t code" style="left:564px;top:511.4px;line-height:18.7px">            <span class="ty">Console</span>.<span class="m">WriteLine</span>(<span class="s">"sum2<i>返回值：</i>"</span> + <span class="v">service</span>.<span class="m">sum2</span>(5, 6));</span>
<span class="t code" style="left:564px;top:548.8px;line-height:18.7px">            <span class="ty">Console</span>.<span class="m">ReadLine</span>();</span>
<span class="t code" style="left:564px;top:567.5px;line-height:18.7px">        <span class="p">}</span></span>
<span class="t code" style="left:564px;top:586.2px;line-height:18.7px">    <span class="p">}</span></span>
<span class="t code" style="left:564px;top:604.9px;line-height:18.7px"><span class="p">}</span></span>
<div class="a" style="left:824px;top:320px;width:2px;height:2px;background:#9a9a9a;"></div>
<div class="a" style="left:829px;top:320px;width:2px;height:2px;background:#9a9a9a;"></div>
<div class="a" style="left:834px;top:320px;width:2px;height:2px;background:#9a9a9a;"></div>
<svg class="a" style="left:523px;top:530px;" width="16" height="17" viewBox="0 0 16 17"><path d="M14.500 1.500 L8 8.500" stroke="#555" stroke-width="2" stroke-linecap="round"/><path d="M8.500 8 L3 13.500" stroke="#1c5fa8" stroke-width="4" stroke-linecap="round"/><path d="M2 15.500 L4 13" stroke="#1c5fa8" stroke-width="1.500"/></svg>
<div class="a" style="left:513px;top:216px;width:948px;height:456px;border:2px solid #e8101c;"></div>
<div class="a" style="left:461px;top:963px;width:1453px;height:20px;background:#f5f5f5;border-right:1px solid #d8d9e3"></div>
<div class="a" style="left:461px;top:982px;width:1453px;height:1px;background:#cccedb;"></div>
<div class="a" style="left:461px;top:963px;width:60px;height:19px;background:#fff;border:1px solid #cccedb;border-top:none"></div>
<span class="t" style="letter-spacing:-0.353px;left:465px;top:966px;line-height:14px;font-size:11.5px">117 %</span>
<svg class="a" style="left:511px;top:971px;" width="7" height="4" viewBox="0 0 7 4"><path d="M0 0 H6 L3 3.5 Z" fill="#555"/></svg>
<div class="a" style="left:545px;top:968px;width:10px;height:10px;background:#2d9a3c;border-radius:50%"></div>
<svg class="a" style="left:546px;top:969px;" width="8" height="8" viewBox="0 0 8 8"><path d="M1.500 4 L3.300 6 L6.500 2" fill="none" stroke="#fff" stroke-width="1.400"/></svg>
<span class="t" style="letter-spacing:-0.357px;left:560px;top:967px;line-height:14px;font-size:11.5px">未找到相关问题</span>
<div class="a" style="left:705px;top:966px;width:1px;height:14px;background:#b8b8c0;"></div>
<svg class="a" style="left:721px;top:966px;" width="13" height="13" viewBox="0 0 13 13"><path d="M11 2 L6 7" stroke="#424242" stroke-width="1.500"/><path d="M2 5 L7.500 4 L9 8.500 L6 12 Z" fill="none" stroke="#424242" stroke-width="1.100"/><path d="M5 1.500 L3.500 3.500" stroke="#424242"/></svg>
<svg class="a" style="left:737px;top:970px;" width="8" height="5" viewBox="0 0 8 5"><path d="M0 0 H7 L3.500 4 Z" fill="#1e1e1e"/></svg>
<span class="t" style="letter-spacing:-0.338px;left:1735px;top:966px;line-height:14px;font-size:11.5px">行: 23</span>
<span class="t" style="letter-spacing:-0.359px;left:1782px;top:966px;line-height:14px;font-size:11.5px">字符: 1</span>
<span class="t" style="letter-spacing:-0.500px;left:1835px;top:966px;line-height:14px;font-size:11.5px">空格</span>
<span class="t" style="letter-spacing:-1.008px;left:1877px;top:966px;line-height:14px;font-size:11.5px">CRLF</span>
<span class="t" style="letter-spacing:-0.214px;left:1675px;top:988px;line-height:26px;font-size:18px;color:#9c9ca2;text-shadow:1px 1px 0 #fafafc">CSDN @</span>
<span class="t" style="letter-spacing:0.373px;left:1748px;top:988px;line-height:26px;font-size:19.500px;color:#a0a0a6;font-weight:350;text-shadow:1px 1px 0 #fafafc">一只爱学习的小白</span>
<div class="a" style="left:1910px;top:201px;width:10px;height:26px;background:#fff;border:1px solid #a8a8a8;border-right:none"></div>
<div class="a" style="left:1915px;top:205px;width:5px;height:7px;background:#7f97d8;"></div>
<div class="a" style="left:1911px;top:221px;width:9px;height:6px;background:#f0f0f0;"></div>
<div class="a" style="left:1908px;top:226px;width:12px;height:57px;background:#fff;border:1px solid #6a6a6a;border-right:none;box-shadow:-1px 0 2px rgba(0,0,0,.25)"></div>
<div class="a" style="left:1917px;top:233px;width:3px;height:12px;background:#7f97d8;"></div>
<div class="a" style="left:1909px;top:254px;width:11px;height:28px;background:#f0f0f0;"></div>
<div class="a" style="left:1907px;top:282px;width:13px;height:458px;background:#fff;border:1px solid #6a6a6a;border-right:none;box-shadow:-1px 0 2px rgba(0,0,0,.25)"></div>
<div class="a" style="left:1914px;top:288px;width:6px;height:9px;background:#7f97d8;"></div>
<div class="a" style="left:1908px;top:304px;width:12px;height:22px;background:#f0f0f0;"></div>
<div class="a" style="left:1911px;top:326px;width:9px;height:328px;background:#fff;border-left:1px solid #ddd"></div>
<div class="a" style="left:1908px;top:654px;width:12px;height:85px;background:#f0f0f0;"></div>
<div class="a" style="left:1911px;top:662px;width:9px;height:14px;background:#ddd;"></div>
<div class="a" style="left:1908px;top:683px;width:12px;height:1px;background:#6a6a6a;"></div>
<div class="a" style="left:1911px;top:700px;width:9px;height:20px;background:#ddd;"></div>
<div class="a" style="left:1916px;top:740px;width:1px;height:82px;background:#777;"></div>
<div class="a" style="left:1917px;top:740px;width:3px;height:82px;background:#f0f0f0;"></div>
</body></html>
